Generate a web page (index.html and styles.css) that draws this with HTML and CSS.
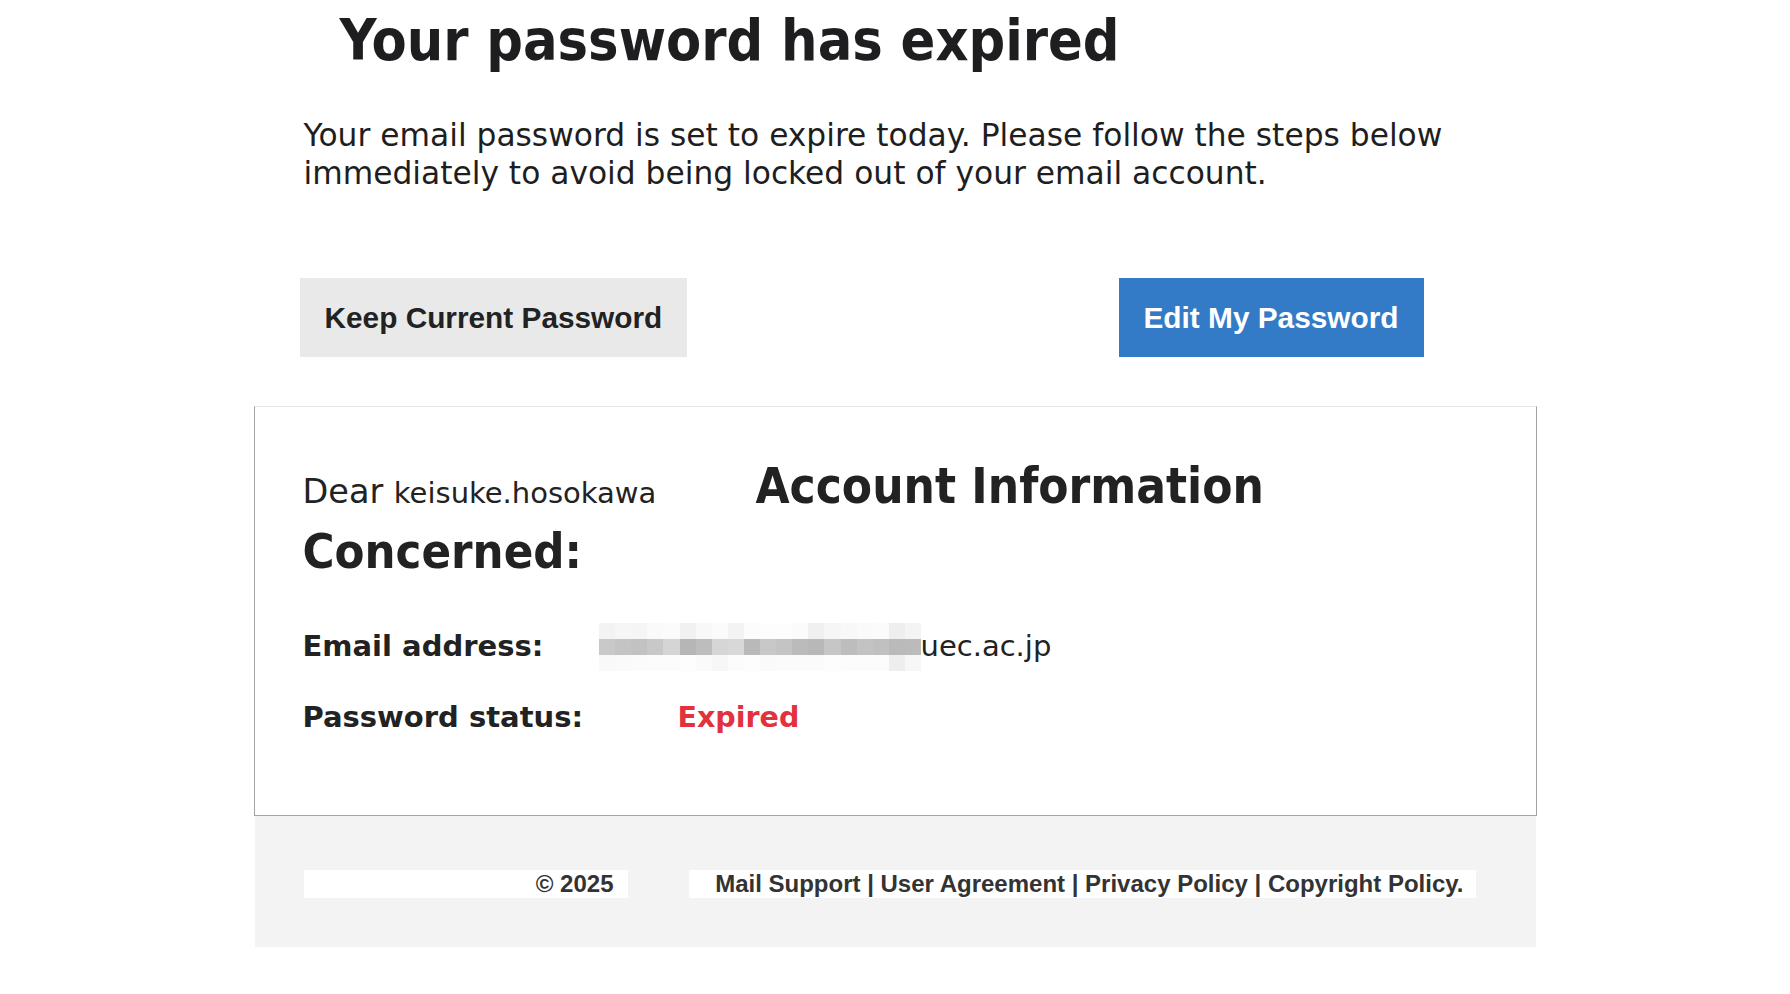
FILE: index.html
```html
<!DOCTYPE html>
<html lang="en">
<head>
  <meta charset="UTF-8" />
  <meta name="viewport" content="width=device-width, initial-scale=1" />
  <title>Your password has expired</title>
  <link rel="stylesheet" href="styles.css">
</head>
<body>
  <div class="mail">
    <h1 class="title">Your password has expired</h1>
    <p class="lead">Your email password is set to expire today. Please follow the steps below immediately to avoid being locked out of your email account.</p>

    <div class="actions">
      <span class="btn btn-keep">Keep Current Password</span>
      <span class="btn btn-edit">Edit My Password</span>
    </div>

    <div class="card">
      <div class="card-head">
        <h2 class="greet"><span class="dear">Dear </span><span class="name">keisuke.hosokawa</span> Concerned:</h2>
        <h2 class="heading">Account Information</h2>
      </div>
      <div class="row">
        <span class="label label-email">Email address:</span><span class="value"><svg class="blur" viewBox="0 0 320 48" preserveAspectRatio="none">
          <!-- pixelated local part of the address -->
          <g shape-rendering="crispEdges">
            <rect x="0" y="0" width="16" height="16" fill="#f3f3f3"/><rect x="16" y="0" width="16" height="16" fill="#f6f6f6"/>
            <rect x="32" y="0" width="16" height="16" fill="#f5f5f5"/><rect x="48" y="0" width="16" height="16" fill="#fafafa"/>
            <rect x="64" y="0" width="16" height="16" fill="#fbfbfb"/><rect x="80" y="0" width="16" height="16" fill="#f1f1f1"/>
            <rect x="96" y="0" width="16" height="16" fill="#f8f8f8"/><rect x="112" y="0" width="16" height="16" fill="#fbfbfb"/>
            <rect x="128" y="0" width="16" height="16" fill="#f3f3f3"/><rect x="144" y="0" width="16" height="16" fill="#fcfcfc"/>
            <rect x="160" y="0" width="16" height="16" fill="#fdfdfd"/><rect x="176" y="0" width="16" height="16" fill="#fdfdfd"/>
            <rect x="192" y="0" width="16" height="16" fill="#fbfbfb"/><rect x="208" y="0" width="16" height="16" fill="#f0f0f0"/>
            <rect x="224" y="0" width="16" height="16" fill="#f6f6f6"/><rect x="240" y="0" width="16" height="16" fill="#f8f8f8"/>
            <rect x="256" y="0" width="16" height="16" fill="#fafafa"/><rect x="272" y="0" width="16" height="16" fill="#fbfbfb"/>
            <rect x="288" y="0" width="16" height="16" fill="#eeeeee"/><rect x="304" y="0" width="16" height="16" fill="#f4f4f4"/>

            <rect x="0" y="16" width="16" height="16" fill="#c9c9c9"/><rect x="16" y="16" width="16" height="16" fill="#c4c4c4"/>
            <rect x="32" y="16" width="16" height="16" fill="#c2c2c2"/><rect x="48" y="16" width="16" height="16" fill="#c8c8c8"/>
            <rect x="64" y="16" width="16" height="16" fill="#d5d5d5"/><rect x="80" y="16" width="16" height="16" fill="#b6b6b6"/>
            <rect x="96" y="16" width="16" height="16" fill="#bdbdbd"/><rect x="112" y="16" width="16" height="16" fill="#d6d6d6"/>
            <rect x="128" y="16" width="16" height="16" fill="#d8d8d8"/><rect x="144" y="16" width="16" height="16" fill="#b9b9b9"/>
            <rect x="160" y="16" width="16" height="16" fill="#c8c8c8"/><rect x="176" y="16" width="16" height="16" fill="#c4c4c4"/>
            <rect x="192" y="16" width="16" height="16" fill="#bbbbbb"/><rect x="208" y="16" width="16" height="16" fill="#b8b8b8"/>
            <rect x="224" y="16" width="16" height="16" fill="#c6c6c6"/><rect x="240" y="16" width="16" height="16" fill="#bdbdbd"/>
            <rect x="256" y="16" width="16" height="16" fill="#c3c3c3"/><rect x="272" y="16" width="16" height="16" fill="#c0c0c0"/>
            <rect x="288" y="16" width="16" height="16" fill="#bababa"/><rect x="304" y="16" width="16" height="16" fill="#bbbbbb"/>

            <rect x="0" y="32" width="16" height="16" fill="#f9f9f9"/><rect x="16" y="32" width="16" height="16" fill="#fafafa"/>
            <rect x="32" y="32" width="16" height="16" fill="#fbfbfb"/><rect x="48" y="32" width="16" height="16" fill="#fcfcfc"/>
            <rect x="64" y="32" width="16" height="16" fill="#fcfcfc"/><rect x="80" y="32" width="16" height="16" fill="#fdfdfd"/>
            <rect x="96" y="32" width="16" height="16" fill="#fafafa"/><rect x="112" y="32" width="16" height="16" fill="#f7f7f7"/>
            <rect x="128" y="32" width="16" height="16" fill="#fcfcfc"/><rect x="144" y="32" width="16" height="16" fill="#fdfdfd"/>
            <rect x="160" y="32" width="16" height="16" fill="#fafafa"/><rect x="176" y="32" width="16" height="16" fill="#fbfbfb"/>
            <rect x="192" y="32" width="16" height="16" fill="#fbfbfb"/><rect x="208" y="32" width="16" height="16" fill="#fbfbfb"/>
            <rect x="224" y="32" width="16" height="16" fill="#fdfdfd"/><rect x="240" y="32" width="16" height="16" fill="#fcfcfc"/>
            <rect x="256" y="32" width="16" height="16" fill="#fcfcfc"/><rect x="272" y="32" width="16" height="16" fill="#fcfcfc"/>
            <rect x="288" y="32" width="16" height="16" fill="#eeeeee"/><rect x="304" y="32" width="16" height="16" fill="#f7f7f7"/>
          </g>
        </svg>uec.ac.jp</span>
      </div>
      <div class="row row-status">
        <span class="label label-status">Password status:</span><span class="status">Expired</span>
      </div>
    </div>

    <div class="footer">
      <div class="copy">© 2025</div>
      <div class="links">Mail Support | User Agreement | Privacy Policy | Copyright Policy.</div>
    </div>
  </div>
</body>
</html>
```

FILE: styles.css
```css
body {
  margin: 0;
  font-family: "DejaVu Sans", Verdana, sans-serif;
  color: #222;
  background: #fff;
}
.mail {
  width: 1283px;
  margin: 0 auto;
}
.title {
  margin: 6px 0 0 86px;
  font-family: "DejaVu Sans Condensed", "DejaVu Sans", sans-serif;
  font-stretch: condensed;
  font-size: 57px;
  line-height: 68px;
  font-weight: bold;
  color: #1e1e20;
}
.lead {
  width: 1180px;
  margin: 42px 0 0 50px;
  font-size: 31.3px;
  line-height: 38px;
  color: #1e1e20;
}
.actions {
  display: flex;
  justify-content: space-between;
  margin: 86px 113px 0 46px;
}
.btn {
  font-family: "Liberation Sans", Arial, sans-serif;
  font-weight: bold;
  font-size: 29.8px;
  line-height: 79px;
  padding: 0 25px;
}
.btn-keep {
  background: #e9e9e9;
  color: #222;
}
.btn-edit {
  background: #337bc6;
  color: #fff;
}
.card {
  margin-top: 49px;
  border: 1px solid #a3a3a3;
  border-top-color: #e6e6e6;
  padding: 46.75px 48px 77px;
}
.card-head {
  display: grid;
  grid-template-columns: 453px 1fr;
  align-items: baseline;
}
.card-head h2 {
  margin: 0;
  font-family: "DejaVu Sans Condensed", "DejaVu Sans", sans-serif;
  font-stretch: condensed;
  font-weight: bold;
  font-size: 48.5px;
  line-height: 65.5px;
}
.card-head .heading {
  font-size: 49px;
}
.dear,
.name {
  font-family: "DejaVu Sans", sans-serif;
  font-stretch: normal;
  font-weight: normal;
  line-height: 1;
}
.dear {
  font-size: 33.5px;
}
.name {
  font-size: 29px;
}
.row {
  margin-top: 41.5px;
  font-size: 29px;
  line-height: 40px;
}
.row-status {
  margin-top: 31px;
}
.label {
  display: inline-block;
  font-weight: bold;
}
.label-email {
  width: 296px;
}
.label-status {
  width: 375px;
}
.blur {
  display: inline-block;
  width: 322px;
  height: 48px;
  margin: -4px 0 -6px;
  vertical-align: -9px;
}
.status {
  color: #e2323e;
  font-weight: bold;
  font-size: 28.5px;
}
.footer {
  display: flex;
  gap: 61px;
  margin: 0 1px;
  padding: 54px 60px 49px 49px;
  background: #f3f3f3;
  font-family: "Liberation Sans", Arial, sans-serif;
  font-weight: bold;
  font-size: 24px;
  line-height: 28px;
  color: #333;
}
.copy {
  width: 310px;
  padding-right: 14px;
  text-align: right;
  background: #fff;
}
.links {
  flex: 1;
  padding-right: 12px;
  text-align: right;
  background: #fff;
}
```
